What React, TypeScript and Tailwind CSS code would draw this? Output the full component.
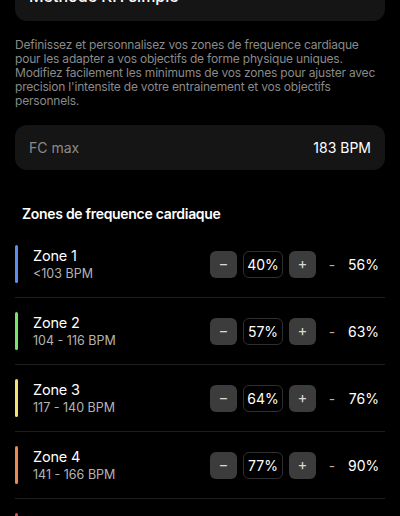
import { ChevronDown } from "lucide-react";

type Zone = {
  name: string;
  range: string;
  color: string;
  min: number;
  max: number;
};

const zones: Zone[] = [
  { name: "Zone 1", range: "<103 BPM", color: "bg-[#5b8cf0]", min: 40, max: 56 },
  { name: "Zone 2", range: "104 - 116 BPM", color: "bg-[#78e46a]", min: 57, max: 63 },
  { name: "Zone 3", range: "117 - 140 BPM", color: "bg-[#f3e36c]", min: 64, max: 76 },
  { name: "Zone 4", range: "141 - 166 BPM", color: "bg-[#ea8a52]", min: 77, max: 90 },
  { name: "Zone 5", range: "167 - 183 BPM", color: "bg-[#e5484d]", min: 91, max: 100 },
];

function StepButton({ label }: { label: string }) {
  return (
    <button className="flex h-[27px] w-[27px] items-center justify-center rounded-[6px] bg-[#3c3c3c] text-[15px] text-[#d8d8d8]">
      {label}
    </button>
  );
}

function ZoneRow({ zone }: { zone: Zone }) {
  return (
    <div className="flex items-center border-b border-[#1e1e1e] py-[14px]">
      <div className={`h-[38px] w-[3px] rounded-full ${zone.color}`} />
      <div className="ml-[15px] flex flex-1 flex-col">
        <span className="text-[14.5px] leading-[19px] tracking-[-0.2px] text-white">{zone.name}</span>
        <span className="text-[12.5px] leading-[17px] text-[#b4b4b4]">{zone.range}</span>
      </div>
      <div className="flex items-center gap-[6px]">
        <StepButton label="−" />
        <div className="flex h-[27px] w-[40px] items-center justify-center rounded-[6px] border border-[#2f2f2f] text-[14px] text-white">
          {zone.min}%
        </div>
        <StepButton label="+" />
      </div>
      <span className="w-[32px] text-center text-[14px] text-[#b0b0b0]">-</span>
      <span className="w-[37px] pr-[6px] text-right text-[14px] text-white">{zone.max}%</span>
    </div>
  );
}

export default function App() {
  return (
    <div className="h-[516px] w-[400px] overflow-hidden bg-black px-[15px] font-['Inter',sans-serif]">
      {/* Method picker */}
      <div className="mt-[-29px] flex h-[50px] items-center justify-between rounded-[12px] bg-[#151515] px-[14px]">
        <span className="text-[16px] font-medium text-white">Methode KH simple</span>
        <ChevronDown size={16} strokeWidth={2.5} className="text-white" />
      </div>

      <p className="mt-[17px] text-[12px] leading-[14px] tracking-[-0.2px] text-[#8a8a8a]">
        Definissez et personnalisez vos zones de frequence cardiaque pour les adapter a vos objectifs
        de forme physique uniques. Modifiez facilement les minimums de vos zones pour ajuster avec
        precision l'intensite de votre entrainement et vos objectifs personnels.
      </p>

      {/* FC max */}
      <div className="mt-[17px] flex h-[45px] items-center justify-between rounded-[12px] bg-[#151515] px-[14px]">
        <span className="text-[14px] text-[#8a8a8a]">FC max</span>
        <span className="text-[14px] text-white">183 BPM</span>
      </div>

      <h2 className="mt-[34px] pl-[7px] text-[14px] font-semibold leading-[20px] tracking-[-0.3px] text-white">
        Zones de frequence cardiaque
      </h2>

      <div className="mt-[7px] flex flex-col">
        {zones.map((zone) => (
          <ZoneRow key={zone.name} zone={zone} />
        ))}
      </div>
    </div>
  );
}
